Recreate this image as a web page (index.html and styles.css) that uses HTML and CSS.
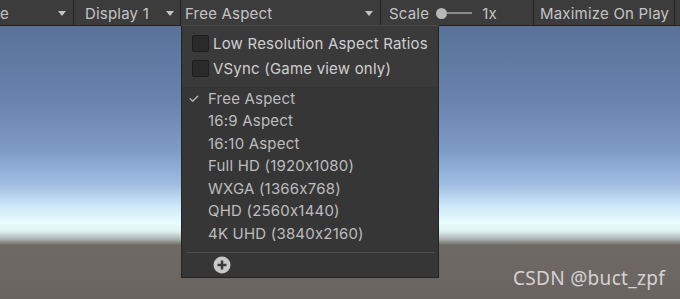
FILE: index.html
```html
<!DOCTYPE html>
<html>
<head>
<meta charset="utf-8">
<link rel="stylesheet" href="styles.css">
</head>
<body>
<div class="page">
  <div class="toolbar">
    <div class="tb-item tb-first"><span class="tb-cut">e</span><span class="arrow"></span></div>
    <div class="tb-item tb-display"><span>Display 1</span><span class="arrow"></span></div>
    <div class="tb-item tb-aspect"><span>Free Aspect</span><span class="arrow"></span></div>
    <div class="tb-item tb-scale">
      <span>Scale</span>
      <span class="slider"><span class="knob"></span><span class="track"></span></span>
      <span class="scale-val">1x</span>
    </div>
    <div class="tb-item tb-max"><span>Maximize On Play</span></div>
    <div class="tb-item tb-rest"></div>
  </div>
  <div class="viewport">
    <div class="menu">
      <div class="menu-top">
        <div class="check-row"><span class="checkbox"></span><span>Low Resolution Aspect Ratios</span></div>
        <div class="check-row"><span class="checkbox"></span><span>VSync (Game view only)</span></div>
      </div>
      <div class="menu-list">
        <div class="list-row"><span class="tick">✓</span><span>Free Aspect</span></div>
        <div class="list-row"><span class="tick"></span><span>16:9 Aspect</span></div>
        <div class="list-row"><span class="tick"></span><span>16:10 Aspect</span></div>
        <div class="list-row"><span class="tick"></span><span>Full HD (1920x1080)</span></div>
        <div class="list-row"><span class="tick"></span><span>WXGA (1366x768)</span></div>
        <div class="list-row"><span class="tick"></span><span>QHD (2560x1440)</span></div>
        <div class="list-row"><span class="tick"></span><span>4K UHD (3840x2160)</span></div>
        <div class="menu-sep"></div>
        <div class="add-row">
          <svg class="plus" width="18" height="18" viewBox="0 0 18 18">
            <circle cx="9" cy="9" r="8.5" fill="#c8c8c8"/>
            <rect x="4.5" y="7.75" width="9" height="2.5" fill="#383838"/>
            <rect x="7.75" y="4.5" width="2.5" height="9" fill="#383838"/>
          </svg>
        </div>
      </div>
    </div>
    <div class="watermark">CSDN @buct_zpf</div>
  </div>
</div>
</body>
</html>
```

FILE: styles.css
```css
* { box-sizing: border-box; }
html, body { margin: 0; padding: 0; }
body {
  width: 680px;
  height: 299px;
  overflow: hidden;
  font-family: Inter, "Noto Sans", sans-serif;
  font-size: 15px;
  letter-spacing: 0.2px;
  font-feature-settings: "calt" 0;
  color: #c4c4c4;
  background: #3c3c3c;
}
.page {
  display: flex;
  flex-direction: column;
  width: 680px;
  height: 299px;
}
.toolbar {
  display: flex;
  height: 26px;
  flex: 0 0 26px;
  background: #3c3c3c;
  border-bottom: 1px solid #232323;
}
.tb-item {
  display: flex;
  align-items: center;
  height: 25px;
  padding-top: 1px;
  border-right: 1px solid #242424;
  overflow: hidden;
  white-space: nowrap;
}
.arrow {
  width: 0;
  height: 0;
  border-left: 4px solid transparent;
  border-right: 4px solid transparent;
  border-top: 5px solid #c4c4c4;
  margin-left: auto;
}
.tb-first { width: 74px; padding-right: 7px; }
.tb-cut { margin-left: 0; }
.tb-display { width: 107px; padding-left: 11px; padding-right: 6px; }
.tb-aspect { width: 200px; padding-left: 4px; padding-right: 7px; }
.tb-scale { width: 153px; padding-left: 8px; }
.slider {
  display: flex;
  align-items: center;
  margin-left: 7px;
}
.knob {
  width: 11px;
  height: 11px;
  border-radius: 50%;
  background: #b8b8b8;
}
.track {
  width: 25px;
  height: 2px;
  background: #8a8a8a;
}
.scale-val { margin-left: 10px; }
.tb-max { width: 141px; padding-left: 6px; }
.tb-rest { flex: 1; border-right: none; }

.viewport {
  position: relative;
  flex: 1;
  background: linear-gradient(to bottom,
    rgb(90,114,152) 0px,
    rgb(104,131,172) 74px,
    rgb(126,155,198) 124px,
    rgb(160,190,225) 159px,
    rgb(205,232,250) 180px,
    rgb(232,252,252) 197px,
    rgb(224,242,242) 205px,
    rgb(172,180,178) 213px,
    rgb(112,106,102) 219px,
    rgb(106,100,97) 273px);
}
.menu {
  position: absolute;
  left: 181px;
  top: -1px;
  width: 258px;
  height: 253px;
  background: #363636;
  border: 1px solid #232323;
  border-top-color: #4a4a4a;
  display: flex;
  flex-direction: column;
}
.menu-top {
  background: #3a3a3a;
  padding: 5px 0 6px 10px;
  color: #d0d0d0;
}
.check-row {
  display: flex;
  align-items: center;
  height: 25px;
}
.checkbox {
  width: 17px;
  height: 17px;
  background: #2a2a2a;
  border: 1px solid #1e1e1e;
  border-radius: 2px;
  margin-right: 4px;
}
.menu-list {
  display: flex;
  flex-direction: column;
  color: #bdbdbd;
}
.list-row {
  display: flex;
  align-items: center;
  height: 22.5px;
}
.tick {
  width: 26px;
  padding-left: 6px;
  font-size: 13px;
  color: #c8c8c8;
}
.menu-sep {
  height: 1px;
  background: #4f4f4f;
  margin: 7px 4px 0 4px;
}
.add-row {
  display: flex;
  align-items: center;
  height: 24px;
  padding-left: 31px;
}
.watermark {
  position: absolute;
  right: 15px;
  bottom: 8px;
  font-family: "Noto Sans", sans-serif;
  font-size: 19px;
  letter-spacing: 0.3px;
  color: rgba(255,255,255,0.72);
}
```
